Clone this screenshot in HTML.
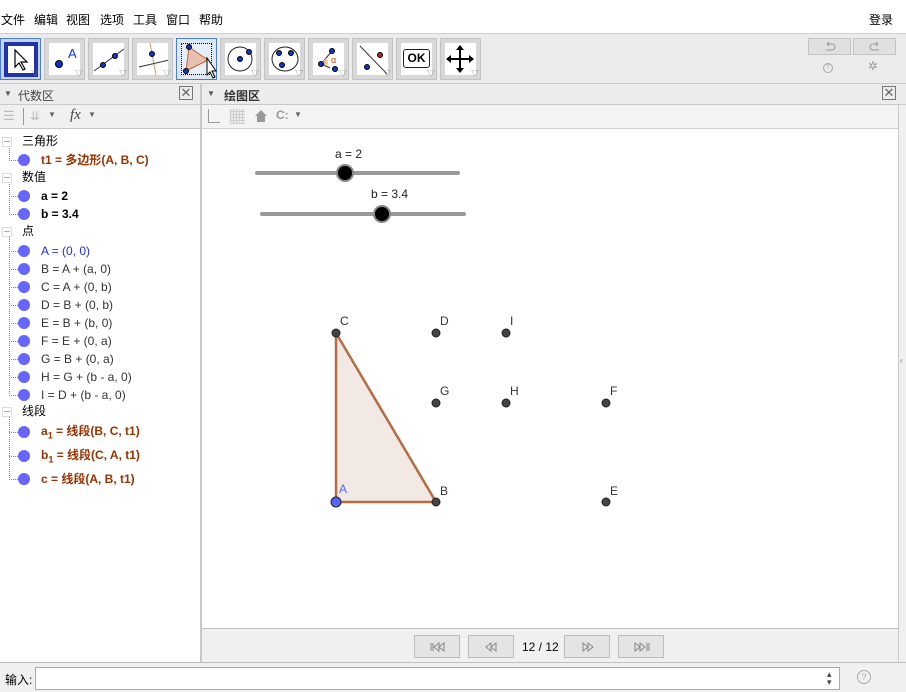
<!DOCTYPE html>
<html><head><meta charset="utf-8"><style>
*{margin:0;padding:0;box-sizing:border-box}
body{width:906px;height:692px;overflow:hidden;background:#fff;font-family:"Liberation Sans","Noto Sans CJK SC",sans-serif;font-size:12px;color:#000;position:relative}
.a{position:absolute}
.menu span{position:absolute;top:11px;font-size:12px}
.tb{position:absolute;top:33px;left:0;width:906px;height:51px;background:#ececec;border-top:1px solid #d0d0d0;border-bottom:1px solid #c8c8c8}
.btn{position:absolute;top:4px;width:41px;height:42px;background:#d8d8d8;border:1px solid #c4c4c4}
.btn .in{position:absolute;left:4px;top:4px;width:31px;height:32px;background:#fff}
.btn .tri{position:absolute;right:1px;bottom:1px;font-size:8px;color:#888;line-height:8px}
.hdr{position:absolute;height:21px;background:#ececec;border-bottom:1px solid #c8c8c8}
.row{position:absolute;left:0;font-size:12px;height:18px;line-height:18px}
.dot{position:absolute;left:18px;width:12px;height:12px;border-radius:50%;background:#6666ff}
.dash{position:absolute;left:9px;width:9px;border-top:1px dotted #888}
.vl{position:absolute;left:9px;border-left:1px dotted #888}
.minus{position:absolute;left:2px;width:10px;height:10px;border:1px solid #ddd;background:#fff}
.minus:after{content:"";position:absolute;left:1px;top:3px;width:6px;border-top:1px solid #aaa}
.brn{color:#993300;font-weight:bold}
.nb{position:absolute;top:635px;width:46px;height:23px;background:#e4e4e4;border:1px solid #bdbdbd}
.nb svg{position:absolute;left:15px;top:6px}
</style></head><body>
<div class="menu">
<span style="left:1px">文件</span><span style="left:34px">编辑</span><span style="left:66px">视图</span><span style="left:100px">选项</span><span style="left:133px">工具</span><span style="left:166px">窗口</span><span style="left:199px">帮助</span><span style="left:869px">登录</span>
</div>
<div class="tb">
 <div class="btn" style="left:0;background:#c6d4e8;border-color:#4f7fc4"><div class="in" style="left:3px;top:3px;width:34px;height:35px;border:4px solid #2233aa"></div>
  <svg class="a" style="left:11px;top:9px" width="20" height="24"><path d="M3 2 L3 19 L7 15 L11 22 L13 21 L9 14 L15 14 Z" fill="#fff" stroke="#000" stroke-width="1.2"/></svg><span class="tri">▽</span></div>
 <div class="btn" style="left:44px"><div class="in"></div><svg class="a" style="left:4px;top:4px" width="31" height="32"><circle cx="10" cy="21" r="3.5" fill="#1133cc" stroke="#000"/><text x="19" y="15" font-size="13" fill="#1133ee" font-family="Liberation Sans">A</text></svg><span class="tri">▽</span></div>
 <div class="btn" style="left:88px"><div class="in"></div><svg class="a" style="left:4px;top:4px" width="31" height="32"><path d="M1 28 L31 6" stroke="#333"/><circle cx="10" cy="22" r="2.5" fill="#1133cc" stroke="#000"/><circle cx="22" cy="13" r="2.5" fill="#1133cc" stroke="#000"/></svg><span class="tri">▽</span></div>
 <div class="btn" style="left:132px"><div class="in"></div><svg class="a" style="left:4px;top:4px" width="31" height="32"><path d="M13 0 L19 32" stroke="#c96"/><path d="M2 24 L32 17" stroke="#333"/><circle cx="15" cy="11" r="2.5" fill="#1133cc" stroke="#000"/></svg><span class="tri">▽</span></div>
 <div class="btn" style="left:176px;background:#dde8f4;border-color:#4f7fc4"><div class="in" style="border:1px dotted #000;background:#e6eef8"></div><svg class="a" style="left:4px;top:4px" width="36" height="36"><path d="M8 4 L27 17 L5 28 Z" fill="#e8c0b0" stroke="#c06030"/><circle cx="8" cy="4" r="2.5" fill="#1133cc" stroke="#000"/><circle cx="5" cy="28" r="2.5" fill="#1133cc" stroke="#000"/><path d="M26 15 L26 32 L29 29 L32 35 L34 34 L31 28 L35 28 Z" fill="#fff" stroke="#000"/></svg></div>
 <div class="btn" style="left:220px"><div class="in"></div><svg class="a" style="left:4px;top:4px" width="31" height="32"><circle cx="15" cy="16" r="12" fill="none" stroke="#222"/><circle cx="15" cy="16" r="2.5" fill="#1133cc" stroke="#000"/><circle cx="24" cy="9" r="2.5" fill="#1133cc" stroke="#000"/></svg><span class="tri">▽</span></div>
 <div class="btn" style="left:264px"><div class="in"></div><svg class="a" style="left:4px;top:4px" width="31" height="32"><ellipse cx="16" cy="16" rx="13" ry="12" fill="none" stroke="#222"/><circle cx="10" cy="10" r="2.5" fill="#1133cc" stroke="#000"/><circle cx="22" cy="10" r="2.5" fill="#1133cc" stroke="#000"/><circle cx="13" cy="22" r="2.5" fill="#1133cc" stroke="#000"/></svg><span class="tri">▽</span></div>
 <div class="btn" style="left:308px"><div class="in"></div><svg class="a" style="left:4px;top:4px" width="31" height="32"><path d="M8 21 L17 25" stroke="#333"/><path d="M8 21 L19 8" stroke="#333"/><path d="M8 21 L13 15 A7 7 0 0 1 14 23 Z" fill="#f5c090"/><text x="18" y="20" font-size="9" fill="#c40">α</text><circle cx="8" cy="21" r="2.5" fill="#1133cc" stroke="#000"/><circle cx="19" cy="8" r="2.5" fill="#1133cc" stroke="#000"/><circle cx="22" cy="26" r="2.5" fill="#1133cc" stroke="#000"/></svg><span class="tri">▽</span></div>
 <div class="btn" style="left:352px"><div class="in"></div><svg class="a" style="left:4px;top:4px" width="31" height="32"><path d="M3 3 L30 31" stroke="#333"/><circle cx="23" cy="12" r="2.5" fill="#b22" stroke="#000"/><circle cx="10" cy="24" r="2.5" fill="#1133cc" stroke="#000"/></svg><span class="tri">▽</span></div>
 <div class="btn" style="left:396px"><div class="in"></div><div class="a" style="left:6px;top:10px;width:27px;height:19px;border:1.5px solid #222;border-radius:3px;font-size:12px;font-weight:bold;text-align:center;line-height:16px">OK</div><span class="tri">▽</span></div>
 <div class="btn" style="left:440px"><div class="in"></div><svg class="a" style="left:4px;top:4px" width="31" height="32"><path d="M15 4 L15 28 M3 16 L27 16" stroke="#000" stroke-width="2"/><path d="M15 2 L11 7 L19 7 Z M15 30 L11 25 L19 25 Z M1 16 L6 12 L6 20 Z M29 16 L24 12 L24 20 Z" fill="#000"/></svg><span class="tri">▽</span></div>
 <div class="a" style="left:808px;top:4px;width:43px;height:17px;background:#e0e0e0;border:1px solid #c4c4c4"><svg class="a" style="left:15px;top:3px" width="12" height="10"><path d="M3 2 H8 A3 3 0 0 1 8 8 H2 M3 2 L5 0 M3 2 L5 4" stroke="#999" fill="none"/></svg></div>
 <div class="a" style="left:853px;top:4px;width:43px;height:17px;background:#e0e0e0;border:1px solid #c4c4c4"><svg class="a" style="left:15px;top:3px" width="12" height="10"><path d="M9 2 H4 A3 3 0 0 0 4 8 H10 M9 2 L7 0 M9 2 L7 4" stroke="#999" fill="none"/></svg></div>
 <div class="a" style="left:823px;top:29px;width:10px;height:10px;border:1px solid #aaa;border-radius:50%;font-size:7px;color:#aaa;text-align:center;line-height:8px">?</div>
 <div class="a" style="left:868px;top:25px;font-size:12px;color:#999">✲</div>
</div>
<div class="hdr" style="left:0;top:84px;width:200px"><span class="a" style="left:4px;top:5px;font-size:8px;color:#555">▼</span><span class="a" style="left:18px;top:3px;color:#444">代数区</span><div class="a" style="left:179px;top:2px;width:14px;height:14px;border:1px solid #777;font-size:13px;line-height:11px;text-align:center;color:#666">✕</div></div>
<div class="a" style="left:0;top:105px;width:200px;height:24px;background:#f0f0f0;border-bottom:1px solid #c8c8c8">
 <span class="a" style="left:3px;top:3px;color:#bbb;font-size:13px">☰</span><div class="a" style="left:23px;top:3px;height:17px;border-left:1px solid #999"></div><span class="a" style="left:30px;top:4px;color:#bbb;font-size:12px">⇊</span><span class="a" style="left:48px;top:5px;font-size:8px;color:#666">▼</span><span class="a" style="left:70px;top:2px;font-family:'Liberation Serif',serif;font-style:italic;font-size:15px;color:#444">fx</span><span class="a" style="left:88px;top:5px;font-size:8px;color:#666">▼</span>
</div>
<div class="a" style="left:200px;top:84px;width:2px;height:578px;background:#c8c8c8"></div>
<div class="hdr" style="left:202px;top:84px;width:704px"><span class="a" style="left:5px;top:5px;font-size:8px;color:#555">▼</span><span class="a" style="left:22px;top:3px;color:#333;font-weight:bold">绘图区</span><div class="a" style="left:680px;top:2px;width:14px;height:14px;border:1px solid #777;font-size:13px;line-height:11px;text-align:center;color:#666">✕</div></div>
<div class="a" style="left:202px;top:105px;width:696px;height:24px;background:#f3f3f3;border-bottom:1px solid #d0d0d0">
 <div class="a" style="left:6px;top:4px;width:12px;height:14px;border-left:1px solid #999;border-bottom:1px solid #999"></div>
 <div class="a" style="left:28px;top:4px;width:15px;height:15px;background:repeating-linear-gradient(90deg,#ccc 0 1px,transparent 1px 3px),repeating-linear-gradient(0deg,#ccc 0 1px,#eee 1px 3px)"></div>
 <svg class="a" style="left:52px;top:4px" width="14" height="14"><path d="M7 1 L1 7 H3 V13 H11 V7 H13 Z" fill="#999"/></svg>
 <span class="a" style="left:74px;top:3px;color:#999;font-weight:bold">C:</span><span class="a" style="left:92px;top:5px;font-size:8px;color:#666">▼</span>
</div>
<div class="a" style="left:898px;top:105px;width:8px;height:557px;background:#f0f0f0;border-left:1px solid #c8c8c8"></div>
<span class="a" style="left:900px;top:356px;font-size:8px;color:#777">‹</span>
<div class="vl" style="top:146px;height:15px"></div><div class="vl" style="top:182px;height:33px"></div><div class="vl" style="top:236px;height:160px"></div><div class="vl" style="top:416px;height:64px"></div>
<div class="minus" style="top:137px"></div><div class="row" style="left:22px;top:132px">三角形</div>
<div class="dash" style="top:160px"></div><div class="dot" style="top:154px"></div><div class="row brn" style="left:41px;top:151px">t1 = 多边形(A, B, C)</div>
<div class="minus" style="top:173px"></div><div class="row" style="left:22px;top:168px">数值</div>
<div class="dash" style="top:196px"></div><div class="dot" style="top:190px"></div><div class="row" style="left:41px;top:187px;font-weight:bold">a = 2</div>
<div class="dash" style="top:214px"></div><div class="dot" style="top:208px"></div><div class="row" style="left:41px;top:205px;font-weight:bold">b = 3.4</div>
<div class="minus" style="top:227px"></div><div class="row" style="left:22px;top:222px">点</div>
<div class="dash" style="top:251px"></div><div class="dot" style="top:245px"></div><div class="row" style="left:41px;top:242px;color:#2233cc">A = (0, 0)</div>
<div class="dash" style="top:269px"></div><div class="dot" style="top:263px"></div><div class="row" style="left:41px;top:260px;color:#333">B = A + (a, 0)</div>
<div class="dash" style="top:287px"></div><div class="dot" style="top:281px"></div><div class="row" style="left:41px;top:278px;color:#333">C = A + (0, b)</div>
<div class="dash" style="top:305px"></div><div class="dot" style="top:299px"></div><div class="row" style="left:41px;top:296px;color:#333">D = B + (0, b)</div>
<div class="dash" style="top:323px"></div><div class="dot" style="top:317px"></div><div class="row" style="left:41px;top:314px;color:#333">E = B + (b, 0)</div>
<div class="dash" style="top:341px"></div><div class="dot" style="top:335px"></div><div class="row" style="left:41px;top:332px;color:#333">F = E + (0, a)</div>
<div class="dash" style="top:359px"></div><div class="dot" style="top:353px"></div><div class="row" style="left:41px;top:350px;color:#333">G = B + (0, a)</div>
<div class="dash" style="top:377px"></div><div class="dot" style="top:371px"></div><div class="row" style="left:41px;top:368px;color:#333">H = G + (b - a, 0)</div>
<div class="dash" style="top:395px"></div><div class="dot" style="top:389px"></div><div class="row" style="left:41px;top:386px;color:#333">I = D + (b - a, 0)</div>
<div class="minus" style="top:407px"></div><div class="row" style="left:22px;top:402px">线段</div>
<div class="dash" style="top:432px"></div><div class="dot" style="top:426px"></div><div class="row brn" style="left:41px;top:422px">a<sub style="font-size:9px">1</sub> = 线段(B, C, t1)</div>
<div class="dash" style="top:456px"></div><div class="dot" style="top:450px"></div><div class="row brn" style="left:41px;top:446px">b<sub style="font-size:9px">1</sub> = 线段(C, A, t1)</div>
<div class="dash" style="top:479px"></div><div class="dot" style="top:473px"></div><div class="row brn" style="left:41px;top:470px">c = 线段(A, B, t1)</div>
<svg class="a" style="left:202px;top:130px" width="696" height="498">
 <text x="133" y="28" font-size="12" fill="#222" font-family="Liberation Sans">a = 2</text>
 <line x1="55" y1="43" x2="256" y2="43" stroke="#999" stroke-width="4" stroke-linecap="round"/>
 <circle cx="143" cy="43" r="8" fill="#000" stroke="#888" stroke-width="2"/>
 <text x="169" y="68" font-size="12" fill="#222" font-family="Liberation Sans">b = 3.4</text>
 <line x1="60" y1="84" x2="262" y2="84" stroke="#999" stroke-width="4" stroke-linecap="round"/>
 <circle cx="180" cy="84" r="8" fill="#000" stroke="#888" stroke-width="2"/>
 <path d="M134 203 L134 372 L234 372 Z" fill="#f3e9e4" stroke="#b86a40" stroke-width="2.5" stroke-linejoin="round"/>
 <g fill="#444" stroke="#222" stroke-width="1">
  <circle cx="134" cy="203" r="4"/><circle cx="234" cy="203" r="4"/><circle cx="304" cy="203" r="4"/>
  <circle cx="234" cy="273" r="4"/><circle cx="304" cy="273" r="4"/><circle cx="404" cy="273" r="4"/>
  <circle cx="234" cy="372" r="4"/><circle cx="404" cy="372" r="4"/>
 </g>
 <circle cx="134" cy="372" r="5" fill="#5566ff" stroke="#222"/>
 <g font-size="12" fill="#333" font-family="Liberation Sans">
  <text x="138" y="195">C</text><text x="238" y="195">D</text><text x="308" y="195">I</text>
  <text x="238" y="265">G</text><text x="308" y="265">H</text><text x="408" y="265">F</text>
  <text x="238" y="365">B</text><text x="408" y="365">E</text>
  <text x="137" y="363" fill="#5566ff">A</text>
 </g>
</svg>
<div class="a" style="left:202px;top:628px;width:696px;height:34px;background:#f0f0f0;border-top:1px solid #c0c0c0"></div>
<div class="nb" style="left:414px"><svg width="16" height="10"><path d="M1 1 V9 M3 1 V9 M9 1 L4 5 L9 9 Z M14 1 L9 5 L14 9 Z" stroke="#888" fill="none"/></svg></div>
<div class="nb" style="left:468px"><svg width="16" height="10"><path d="M7 1 L2 5 L7 9 Z M12 1 L7 5 L12 9 Z" stroke="#888" fill="none"/></svg></div>
<span class="a" style="left:522px;top:640px;font-size:12px">12 / 12</span>
<div class="nb" style="left:564px"><svg width="16" height="10"><path d="M3 1 L8 5 L3 9 Z M8 1 L13 5 L8 9 Z" stroke="#888" fill="none"/></svg></div>
<div class="nb" style="left:618px"><svg width="16" height="10"><path d="M1 1 L6 5 L1 9 Z M6 1 L11 5 L6 9 Z M13 1 V9 M15 1 V9" stroke="#888" fill="none"/></svg></div>
<div class="a" style="left:0;top:662px;width:906px;height:30px;background:#f0f0f0;border-top:1px solid #c0c0c0"></div>
<span class="a" style="left:5px;top:671px;font-size:12px">输入:</span>
<div class="a" style="left:35px;top:667px;width:805px;height:23px;background:#fff;border:1px solid #aaa"></div>
<span class="a" style="left:827px;top:670px;font-size:9px;color:#444;line-height:8px">▴<br>▾</span>
<div class="a" style="left:857px;top:670px;width:14px;height:14px;border:1px solid #aaa;border-radius:50%;font-size:9px;color:#aaa;text-align:center;line-height:12px">?</div>
</body></html>
